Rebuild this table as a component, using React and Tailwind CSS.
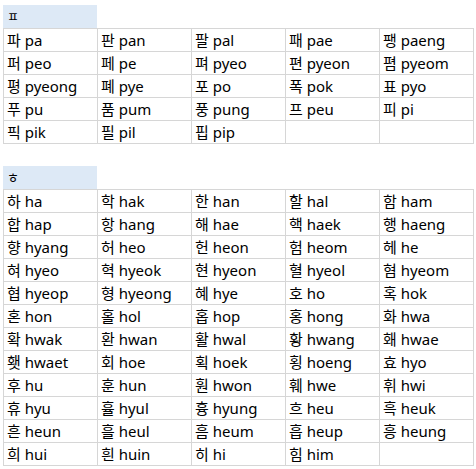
import React from 'react';

const pieup = [
  ['파 pa', '판 pan', '팔 pal', '패 pae', '팽 paeng'],
  ['퍼 peo', '페 pe', '펴 pyeo', '편 pyeon', '폄 pyeom'],
  ['평 pyeong', '폐 pye', '포 po', '폭 pok', '표 pyo'],
  ['푸 pu', '품 pum', '풍 pung', '프 peu', '피 pi'],
  ['픽 pik', '필 pil', '핍 pip', '', ''],
];

const hieut = [
  ['하 ha', '학 hak', '한 han', '할 hal', '함 ham'],
  ['합 hap', '항 hang', '해 hae', '핵 haek', '행 haeng'],
  ['향 hyang', '허 heo', '헌 heon', '험 heom', '헤 he'],
  ['혀 hyeo', '혁 hyeok', '현 hyeon', '혈 hyeol', '혐 hyeom'],
  ['협 hyeop', '형 hyeong', '혜 hye', '호 ho', '혹 hok'],
  ['혼 hon', '홀 hol', '홉 hop', '홍 hong', '화 hwa'],
  ['확 hwak', '환 hwan', '활 hwal', '황 hwang', '홰 hwae'],
  ['횃 hwaet', '회 hoe', '획 hoek', '횡 hoeng', '효 hyo'],
  ['후 hu', '훈 hun', '훤 hwon', '훼 hwe', '휘 hwi'],
  ['휴 hyu', '휼 hyul', '흉 hyung', '흐 heu', '흑 heuk'],
  ['흔 heun', '흘 heul', '흠 heum', '흡 heup', '흥 heung'],
  ['희 hui', '흰 huin', '히 hi', '힘 him', ''],
];

const Section = ({ title, rows }) => (
  <div>
    <div className="w-[94px] h-[23px] bg-[#dde9f6] pl-[4px] flex items-center text-[13px]">
      {title}
    </div>
    <div className="grid grid-cols-[repeat(5,94px)] w-fit border-l border-t border-[#d6d6d6]">
      {rows.flat().map((cell, i) => (
        <div
          key={i}
          className="h-[23px] border-r border-b border-[#d6d6d6] pl-[3px] flex items-center whitespace-nowrap text-[15px] leading-none bg-white"
        >
          {cell}
        </div>
      ))}
    </div>
  </div>
);

const App = () => {
  return (
    <div
      className="pt-[5px] pl-[3px] text-black flex flex-col gap-[22px]"
      style={{ fontFamily: '"Noto Sans", "Noto Sans CJK KR", sans-serif' }}
    >
      <Section title="ㅍ" rows={pieup} />
      <Section title="ㅎ" rows={hieut} />
    </div>
  );
};

export default App;
